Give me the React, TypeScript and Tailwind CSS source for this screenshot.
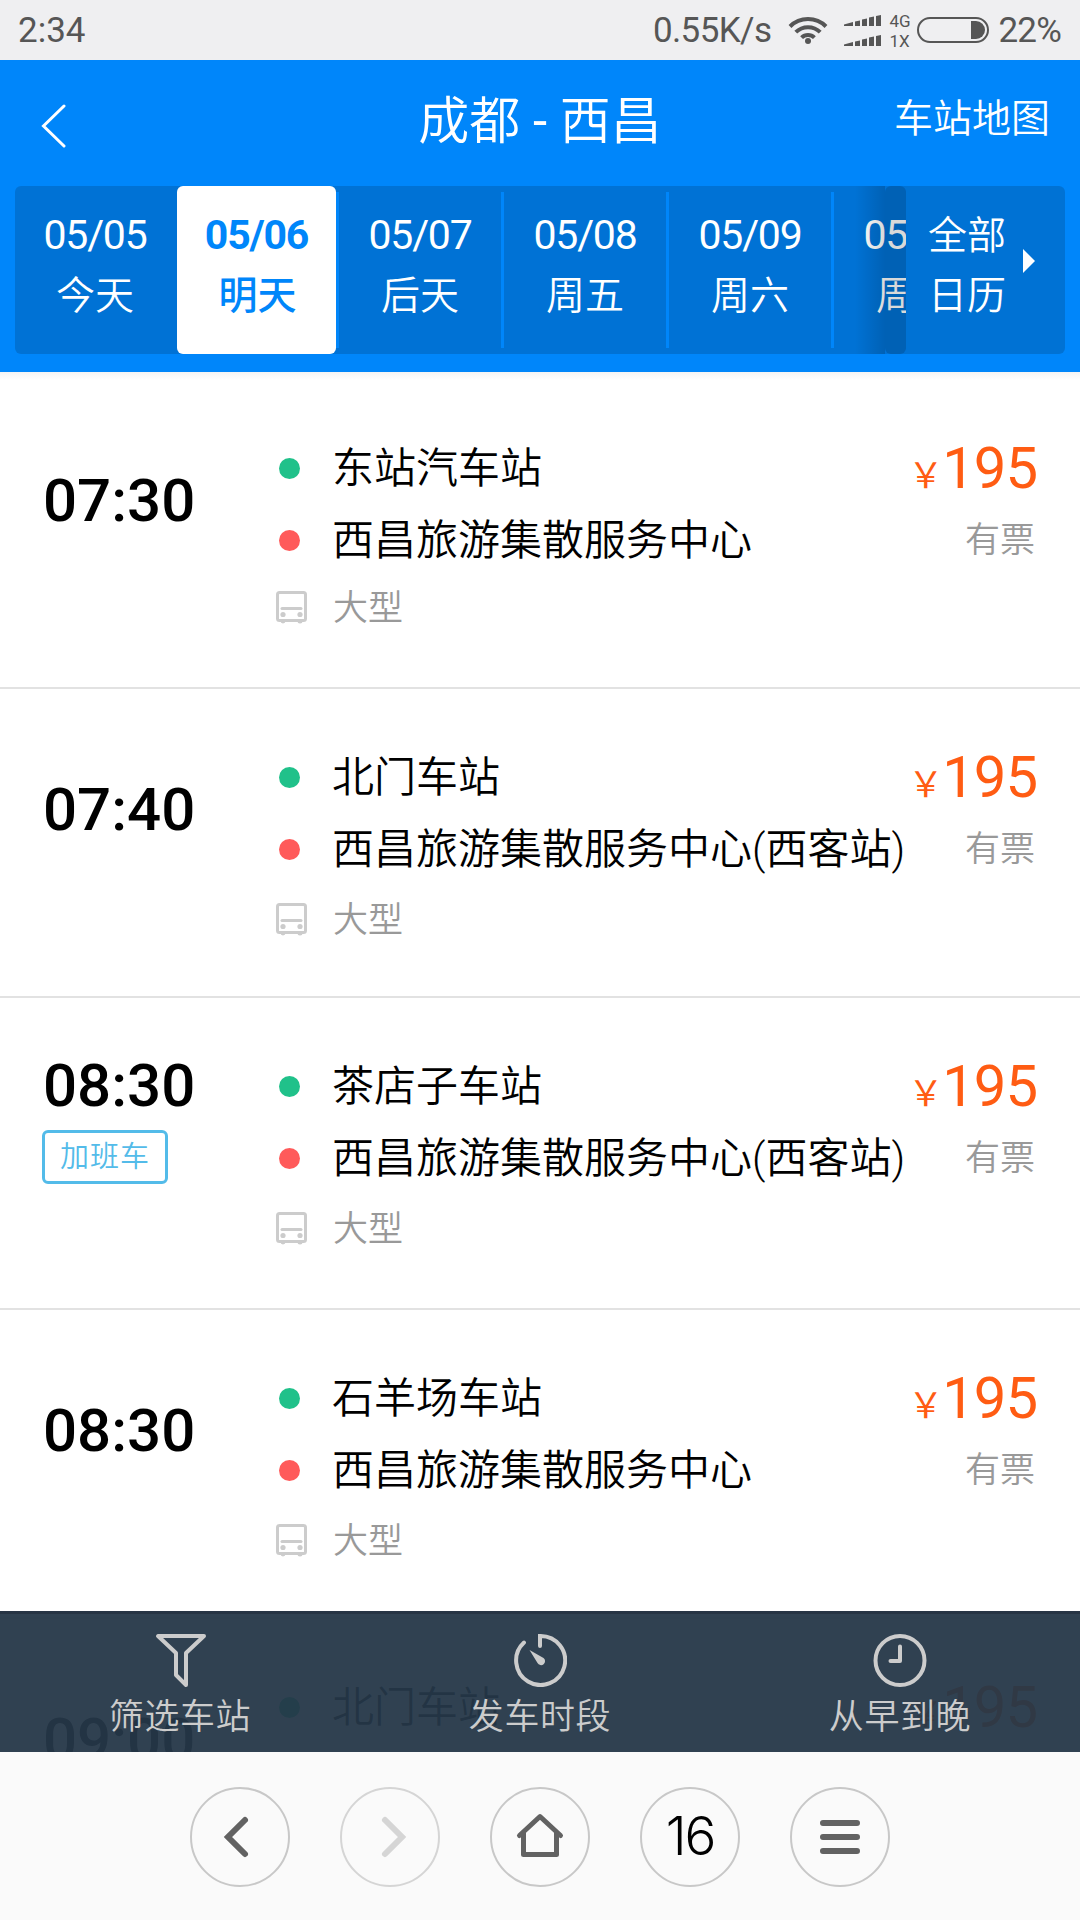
import React from 'react';

type Trip = {
  id: number;
  time: string;
  extra?: boolean;
  from: string;
  to: string;
  price: number;
};

const trips: Trip[] = [
  { id: 1, time: '07:30', from: '东站汽车站', to: '西昌旅游集散服务中心', price: 195 },
  { id: 2, time: '07:40', from: '北门车站', to: '西昌旅游集散服务中心(西客站)', price: 195 },
  { id: 3, time: '08:30', extra: true, from: '茶店子车站', to: '西昌旅游集散服务中心(西客站)', price: 195 },
  { id: 4, time: '08:30', from: '石羊场车站', to: '西昌旅游集散服务中心', price: 195 },
  { id: 5, time: '09:00', from: '北门车站', to: '西昌旅游集散服务中心', price: 195 },
];

const days = [
  { date: '05/05', label: '今天' },
  { date: '05/06', label: '明天' },
  { date: '05/07', label: '后天' },
  { date: '05/08', label: '周五' },
  { date: '05/09', label: '周六' },
  { date: '05/10', label: '周日' },
];

const SignalBars = () => (
  <svg width="37" height="11" viewBox="0 0 37 11" fill="#565656">
    <path d="M0 9.5L9 7v4H0z" />
    <path d="M11 6.5l5-1V11h-5z" />
    <path d="M18 4.5l5-1V11h-5z" />
    <path d="M25 2.5l5-1V11h-5z" />
    <path d="M32 1l5-1v11h-5z" />
  </svg>
);

const StatusBar = () => (
  <div className="flex h-[60px] shrink-0 items-center bg-[#efeff1] pl-[18px] pr-[19px] text-[35px] leading-[60px] text-[#565656]">
    <span className="mt-[2px]">2:34</span>
    <span className="ml-auto mt-[2px] tracking-[-0.6px]">0.55K/s</span>
    <svg className="ml-[17px] mt-[-1px]" width="40" height="30" viewBox="0 0 40 30" fill="none" stroke="#565656" strokeWidth="4">
      <path d="M2 11.5a25.5 25.5 0 0 1 36 0" />
      <path d="M7.8 17.2a17.3 17.3 0 0 1 24.4 0" />
      <path d="M13.6 22.6a9 9 0 0 1 12.8 0" />
      <circle cx="20" cy="26" r="3" fill="#565656" stroke="none" />
    </svg>
    <div className="ml-4 flex flex-col gap-[9px]">
      <SignalBars />
      <SignalBars />
    </div>
    <div className="ml-2 mt-px flex w-[22px] flex-col text-[17px] leading-[20px]">
      <span>4G</span>
      <span>1X</span>
    </div>
    <div className="ml-[6px] flex h-[26px] w-[72px] justify-end rounded-full border-2 border-[#565656] p-[2px]">
      <div className="w-[14px] rounded-r-full bg-[#565656]" />
    </div>
    <span className="ml-[9px] mt-[2px] tracking-[-0.8px]">22%</span>
  </div>
);

const Header = () => (
  <header className="h-[312px] shrink-0 bg-[#0086fa] text-white">
    <div className="grid h-[126px] grid-cols-[1fr_auto_1fr] items-center">
      <svg className="ml-[41px] mt-[6px]" width="26" height="44" viewBox="0 0 26 44" fill="none" stroke="white" strokeWidth="3" strokeLinecap="round">
        <path d="M23 2L2.500 22L23 42" />
      </svg>
      <h1 className="mt-[-3px] text-[51px] font-[350] leading-[60px]">
        成都<span className="font-normal"> - </span>西昌
      </h1>
      <span className="mr-[30px] mt-[-8px] text-right text-[39px] font-[350] leading-[50px]">车站地图</span>
    </div>

    {/* Day picker */}
    <div className="relative mx-[15px] flex h-[168px]">
      <div className="flex w-[891px] overflow-hidden rounded-[6px] bg-[#0072d5]">
        {days.map((day, idx) =>
          idx === 1 ? (
            <div key={day.date} className="flex w-[159px] shrink-0 flex-col items-center rounded-[6px] bg-white pt-[19px] text-[39px] font-medium leading-[60px] text-[#0086fa]">
              <span className="text-[41px] font-bold tracking-[-1.2px]">{day.date}</span>
              <span className="ml-[2px] mt-px">{day.label}</span>
            </div>
          ) : (
            <div
              key={day.date}
              className={`my-[6px] flex shrink-0 flex-col items-center pt-[13px] text-[39px] font-[350] leading-[60px] ${
                idx === 0 ? 'w-[162px] pr-[2px]' : 'w-[165px] border-l-[3px] border-[#0086fa]'
              }`}
            >
              <span className="text-[41px] font-normal tracking-[-1.2px]">{day.date}</span>
              <span className="mt-px">{day.label}</span>
            </div>
          )
        )}
      </div>
      <div className="absolute inset-y-0 right-[180px] w-[30px] bg-linear-to-r from-black/0 to-black/15" />
      <div className="absolute inset-y-0 right-0 flex w-[180px] items-center rounded-[6px] bg-black/15 pl-[43px]">
        <div className="mt-[-8px] w-[84px] text-[39px] font-[350] leading-[60px]">
          <div>全部</div>
          <div>日历</div>
        </div>
        <svg className="ml-[11px] mt-[-18px]" width="12" height="24" viewBox="0 0 12 24" fill="white">
          <path d="M0 0L12 12L0 24z" />
        </svg>
      </div>
    </div>
  </header>
);

const BusIcon = () => (
  <svg width="31" height="34" viewBox="0 0 31 34" fill="none" stroke="#cccccc" strokeWidth="3">
    <rect x="1.500" y="1.500" width="28" height="28" rx="2" />
    <path d="M6 17.500h19" strokeLinecap="round" />
    <circle cx="7" cy="23.500" r="2.600" fill="#cccccc" stroke="none" />
    <circle cx="24" cy="23.500" r="2.600" fill="#cccccc" stroke="none" />
    <path d="M4.500 30h5a2.500 2.500 0 0 1-5 0zM21.500 30h5a2.500 2.500 0 0 1-5 0z" fill="#cccccc" stroke="none" />
  </svg>
);

const TripRow = ({ trip }: { trip: Trip }) => (
  <div className={`flex shrink-0 border-b-2 border-[#e2e2e2] ${trip.extra ? 'h-[312px]' : 'h-[309px]'}`}>
    {/* Departure time */}
    <div className="w-[276px] shrink-0 pl-[42px]">
      <div className={`pl-px text-[60px] font-medium leading-[70px] ${trip.extra ? 'mt-[53px]' : 'mt-[86px]'}`}>{trip.time}</div>
      {trip.extra && (
        <div className="mt-[9px] flex h-[54px] w-[126px] justify-center rounded-[6px] border-[3px] border-[#53bbe9] text-[29px] font-[350] leading-[48px] tracking-[1px] text-[#53bbe9]">
          加班车
        </div>
      )}
    </div>

    {/* Stations */}
    <div className="grow pt-[52px] text-[42px] font-[350] leading-[72px] text-black">
      <div className="flex h-[72px] items-center">
        <span className="ml-[3px] mr-[32px] size-[21px] rounded-full bg-[#20c18a]" />
        <span className="mt-[2px]">{trip.from}</span>
      </div>
      <div className="flex h-[72px] items-center">
        <span className="ml-[3px] mr-[32px] size-[21px] rounded-full bg-[#ff5a5a]" />
        <span className="mt-[2px]">{trip.to}</span>
      </div>
      <div className={`flex h-[66px] items-center text-[35px] text-[#999999] ${trip.id === 1 ? 'mt-[-1px]' : 'mt-[2px]'}`}>
        <BusIcon />
        <span className="ml-[26px] mt-[2px]">大型</span>
      </div>
    </div>

    {/* Price */}
    <div className="shrink-0 pr-[45px] pt-[52px] text-right leading-[72px]">
      <div className="mr-[-2px] h-[73px] text-[58px] tracking-[-1px] text-[#ff5c13]">
        <span className="font-['Noto_Sans_CJK_SC',sans-serif] text-[35px]">{'\uffe5'}</span>
        {trip.price}
      </div>
      <div className="text-[35px] font-[350] text-[#999999]">有票</div>
    </div>
  </div>
);

const filterClass = 'flex flex-1 flex-col items-center pt-[19px]';

const FilterBar = () => (
  <div className="absolute inset-x-0 bottom-0 flex h-[141px] border-t-[3px] border-[#273444] bg-[#253748]/95 text-[35px] font-[350] leading-[62px] tracking-[0.6px] text-[#cccccc]">
    <div className={filterClass}>
      <svg width="54" height="54" viewBox="0 0 54 54" fill="none" stroke="#cccccc" strokeWidth="4" strokeLinejoin="round">
        <path d="M5 3H51L33 20V52L23 42V20z" />
      </svg>
      <span>筛选车站</span>
    </div>
    <div className={filterClass}>
      <svg width="54" height="54" viewBox="0 0 54 54" fill="none" stroke="#cccccc" strokeWidth="4" strokeLinecap="round">
        <path d="M27 13V3A24.500 24.500 0 1 1 11 9.500" />
        <path d="M16.500 17L30.500 25A4 4 0 1 1 24.500 30z" fill="#cccccc" stroke="none" />
      </svg>
      <span>发车时段</span>
    </div>
    <div className={filterClass}>
      <svg width="54" height="54" viewBox="0 0 54 54" fill="none" stroke="#cccccc" strokeWidth="4" strokeLinecap="round" strokeLinejoin="round">
        <circle cx="27" cy="27.500" r="24.500" />
        <path d="M27 13.500V28H17.500" />
      </svg>
      <span>从早到晚</span>
    </div>
  </div>
);

const navClass = 'flex size-[100px] items-center justify-center rounded-full border-2';

const BrowserNav = () => (
  <nav className="flex h-[168px] shrink-0 items-center justify-center gap-[50px] bg-[#fafafa] pt-[2px]">
    <div className={navClass + ' border-[#c8c8c8]'}>
      <svg width="100" height="100" viewBox="0 0 100 100" className="shrink-0" fill="none" stroke="#626262" strokeWidth="6" strokeLinecap="round">
        <path d="M55 33L38 50L55 67" />
      </svg>
    </div>
    <div className={navClass + ' border-[#d5d5d5]'}>
      <svg width="100" height="100" viewBox="0 0 100 100" className="shrink-0" fill="none" stroke="#d5d5d5" strokeWidth="6" strokeLinecap="round">
        <path d="M45 33L62 50L45 67" />
      </svg>
    </div>
    <div className={navClass + ' border-[#c8c8c8]'}>
      <svg width="100" height="100" viewBox="0 0 100 100" className="shrink-0" fill="none" stroke="#626262" strokeWidth="5" strokeLinecap="round" strokeLinejoin="round">
        <path d="M29.500 48.500L50 29.500L70.500 48.500" />
        <path d="M33.500 46V67.500H66.500V46" />
      </svg>
    </div>
    <div className={navClass + " border-[#c8c8c8] pb-px font-['Inter'] text-[53px] font-light tracking-[-2px] text-black"}>16</div>
    <div className={navClass + ' border-[#c8c8c8]'}>
      <svg width="100" height="100" viewBox="0 0 100 100" className="shrink-0" stroke="#626262" strokeWidth="6" strokeLinecap="round">
        <path d="M33 36H67M33 50H67M33 64H67" />
      </svg>
    </div>
  </nav>
);

const App = () => {
  return (
    <div className="flex h-[1920px] w-[1080px] flex-col overflow-hidden bg-white font-[Roboto,'Noto_Sans_CJK_SC',sans-serif]">
      <StatusBar />
      <Header />
      <main className="relative flex min-h-0 grow flex-col overflow-hidden bg-white">
        <div className="h-[8px] shrink-0 bg-linear-to-b from-[#f4f4f4] to-white" />
        {trips.map((trip) => (
          <TripRow key={trip.id} trip={trip} />
        ))}
        <FilterBar />
      </main>
      <BrowserNav />
    </div>
  );
};

export default App;
